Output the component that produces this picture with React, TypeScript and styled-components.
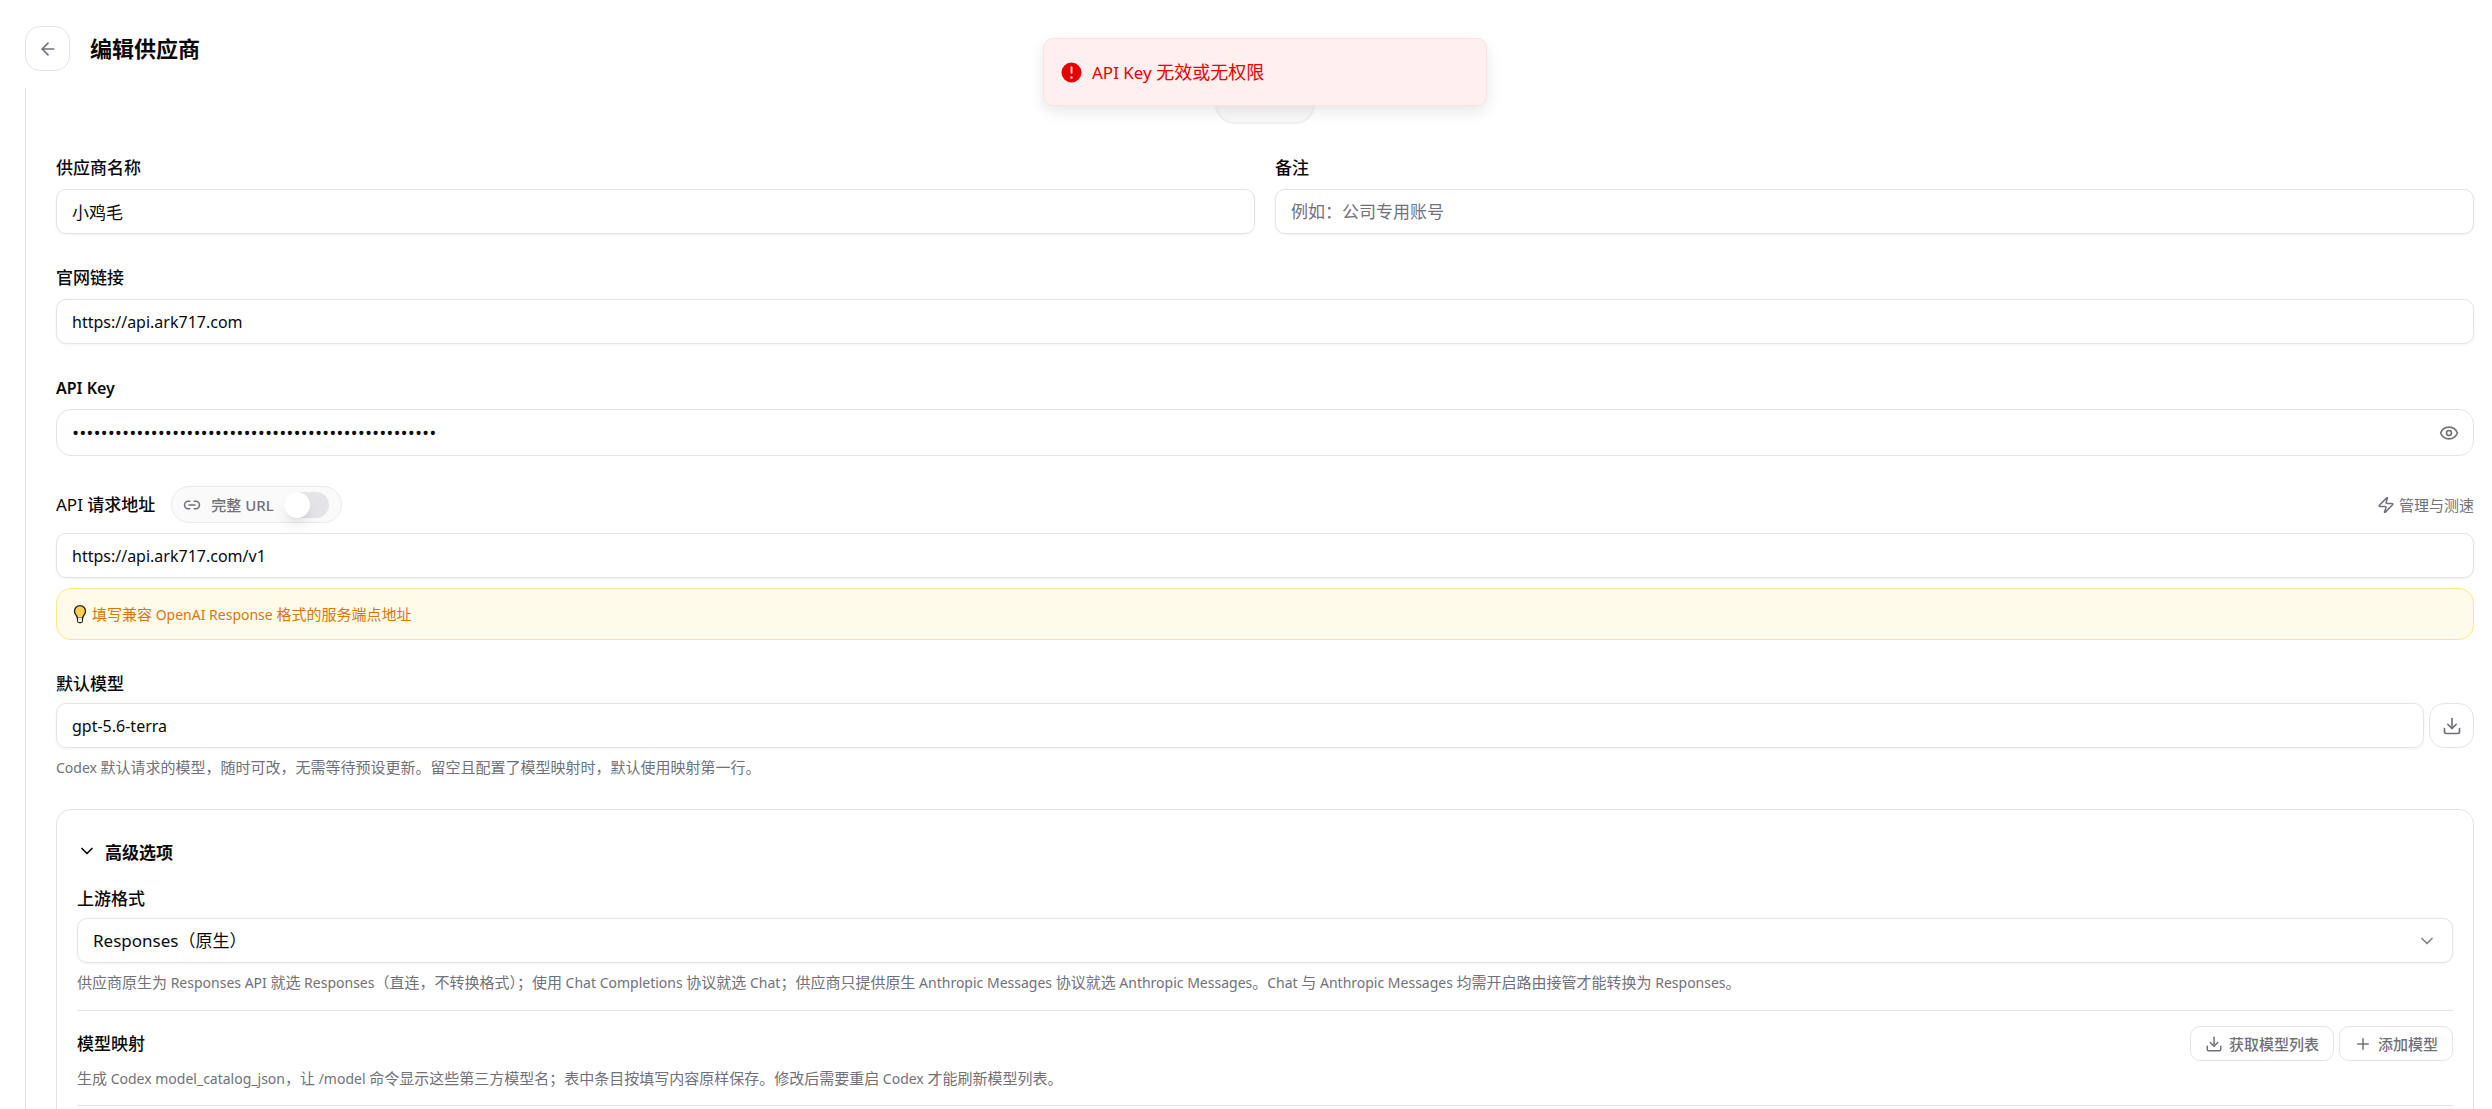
import React, { useState } from "react";
import styled, { createGlobalStyle } from "styled-components";
import { ArrowLeft, ChevronDown, Download, Eye, Link2, Plus, Zap } from "lucide-react";

const color = {
  text: "#09090b",
  muted: "#71717a",
  border: "#e4e4e7",
  surface: "#ffffff",
};

const GlobalStyle = createGlobalStyle`
  *, *::before, *::after { box-sizing: border-box; }
  body {
    margin: 0;
    background: ${color.surface};
    color: ${color.text};
    font-family: "Noto Sans", "Noto Sans CJK SC", sans-serif;
    font-size: 17px;
  }
  button, input, select { font: inherit; color: inherit; margin: 0; }
  svg { flex: none; display: block; }
`;

const Page = styled.div`
  display: flex;
  flex-direction: column;
  height: 100vh;
  overflow: hidden;
`;

const Header = styled.header`
  display: flex;
  align-items: center;
  gap: 20px;
  padding: 26px 25px 17px;
`;

const Title = styled.h1`
  margin: 0;
  padding-bottom: 2px;
  font-size: 22px;
  line-height: 32px;
  font-weight: 700;
`;

const IconButton = styled.button`
  display: flex;
  align-items: center;
  justify-content: center;
  flex: none;
  width: 45px;
  height: 45px;
  padding: 0;
  border: 1px solid ${color.border};
  border-radius: 15px;
  background: ${color.surface};
  color: ${color.muted};
  cursor: pointer;
`;

const Main = styled.main`
  flex: 1;
  min-height: 0;
  margin-left: 25px;
  padding: 0 18px 0 30px;
  border-left: 1px solid ${color.border};
  overflow-y: auto;
  scrollbar-width: none;
`;

const ProviderIcon = styled.button`
  display: block;
  width: 100px;
  height: 100px;
  margin: -64px auto 0;
  border: 2px solid #f1f1f2;
  border-radius: 20px;
  background: #f9f9fa;
`;

const Form = styled.form`
  display: flex;
  flex-direction: column;
  gap: 30px;
  padding: 30px 0 120px;
`;

const Columns = styled.div`
  display: grid;
  grid-template-columns: 1fr 1fr;
  gap: 20px;
`;

const Stack = styled.div<{ $gap: number }>`
  display: flex;
  flex-direction: column;
  gap: ${(p) => p.$gap}px;
`;

const Label = styled.label<{ $strong?: boolean }>`
  line-height: 28px;
  font-weight: ${(p) => (p.$strong ? 600 : 500)};
`;

const Latin = styled.span<{ $size: number; $regular?: boolean }>`
  font-size: ${(p) => p.$size}px;
  font-weight: ${(p) => (p.$regular ? 400 : "inherit")};
  line-height: 1;
`;

const Input = styled.input<{ $latin?: boolean }>`
  flex: 1;
  width: 100%;
  min-height: 45px;
  padding: 0 15px;
  border: 1px solid ${color.border};
  border-radius: 10px;
  background: ${color.surface};
  box-shadow: 0 1px 3px rgba(0, 0, 0, 0.05);
  font-size: ${(p) => (p.$latin ? 16 : 17)}px;
  outline: none;
  &::placeholder { color: ${color.muted}; opacity: 1; }
`;

const SecretBox = styled.div`
  display: flex;
  align-items: center;
  height: 47px;
  padding-right: 14px;
  border: 1px solid ${color.border};
  border-radius: 15px;
`;

const SecretInput = styled.input`
  flex: 1;
  min-width: 0;
  height: 100%;
  padding: 0 15px;
  border: 0;
  background: transparent;
  font-family: "Open Sans", "Noto Sans CJK SC", sans-serif;
  font-size: 19px;
  outline: none;
`;

const PlainButton = styled.button`
  display: inline-flex;
  align-items: center;
  gap: 4px;
  padding: 0;
  border: 0;
  background: none;
  color: ${color.muted};
  font-size: 15px;
  line-height: 22px;
  cursor: pointer;
`;

const Row = styled.div<{ $gap?: number; $spread?: boolean }>`
  display: flex;
  align-items: center;
  gap: ${(p) => p.$gap ?? 0}px;
  justify-content: ${(p) => (p.$spread ? "space-between" : "flex-start")};
`;

const UrlToggle = styled.label`
  display: flex;
  align-items: center;
  gap: 10px;
  height: 37px;
  padding: 0 12px 0 11px;
  border: 1px solid #e9e9eb;
  border-radius: 19px;
  background: #fafafa;
  color: ${color.muted};
  font-size: 15px;
  font-weight: 500;
`;

const Switch = styled.input`
  appearance: none;
  width: 45px;
  height: 26px;
  border-radius: 13px;
  background: #e4e4e7;
  cursor: pointer;
  &::before {
    content: "";
    display: block;
    width: 26px;
    height: 26px;
    border-radius: 50%;
    background: #fff;
    box-shadow: 0 10px 15px -3px rgba(0, 0, 0, 0.1), 0 4px 6px -4px rgba(0, 0, 0, 0.1);
  }
  &:checked { background: #3b82f6; }
  &:checked::before { margin-left: 19px; }
`;

const Hint = styled.div`
  display: flex;
  align-items: center;
  gap: 4px;
  height: 52px;
  padding: 0 15px;
  border: 1px solid #fde68a;
  border-radius: 15px;
  background: #fffbeb;
  color: #d97706;
  font-size: 15px;
  line-height: 22px;
`;

const Help = styled.p`
  margin: 0;
  padding-bottom: 2px;
  color: ${color.muted};
  font-size: 15px;
  line-height: 19px;
`;

const Card = styled.section`
  padding: 20px;
  border: 1px solid ${color.border};
  border-radius: 15px;
`;

const Disclosure = styled.button`
  display: flex;
  align-items: center;
  gap: 8px;
  height: 42px;
  margin-bottom: 13px;
  padding: 0;
  border: 0;
  background: none;
  font-weight: 700;
  cursor: pointer;
`;

const SelectBox = styled.div`
  display: grid;
  align-items: center;
  & > * { grid-area: 1 / 1; }
  & > svg {
    justify-self: end;
    margin-right: 16px;
    opacity: 0.5;
    pointer-events: none;
  }
`;

const Select = styled.select`
  appearance: none;
  width: 100%;
  height: 45px;
  padding: 0 15px;
  border: 1px solid ${color.border};
  border-radius: 10px;
  background: ${color.surface};
  box-shadow: 0 1px 3px rgba(0, 0, 0, 0.05);
  outline: none;
`;

const Mapping = styled.div`
  margin-top: 16px;
  padding: 15px 0;
  border-top: 1px solid ${color.border};
  border-bottom: 1px solid ${color.border};
`;

const SmallButton = styled.button`
  display: inline-flex;
  align-items: center;
  gap: 6px;
  height: 35px;
  padding: 0 14px;
  border: 1px solid ${color.border};
  border-radius: 10px;
  background: ${color.surface};
  color: ${color.muted};
  font-size: 15px;
  font-weight: 500;
  cursor: pointer;
`;

const SectionTitle = styled.h2`
  margin: 0;
  font-size: 17px;
  line-height: 28px;
  font-weight: 500;
`;

const ToastRegion = styled.div`
  position: absolute;
  top: 38px;
  left: 56px;
  right: 18px;
  display: flex;
  justify-content: center;
  pointer-events: none;
`;

const Toast = styled.div`
  display: flex;
  align-items: center;
  gap: 8px;
  width: 444px;
  height: 68px;
  padding: 0 15px;
  border: 1px solid #ffe0e1;
  border-radius: 10px;
  background: #fff0f0;
  box-shadow: 0 5px 15px rgba(0, 0, 0, 0.1);
  color: #e60000;
  font-size: 18px;
  line-height: 24px;
`;

function MixedText({ text, size, regular }: { text: string; size: number; regular?: boolean }) {
  return (
    <>
      {text.split(/([\x20-\x7e]+)/).map((part, i) =>
        i % 2 ? (
          <Latin key={i} $size={size} $regular={regular}>
            {part}
          </Latin>
        ) : (
          part
        )
      )}
    </>
  );
}

function BulbIcon() {
  return (
    <svg width="16" height="20" viewBox="0 0 16 20" aria-hidden="true">
      <path
        d="M5.6 13.5h4.8V17a1.7 1.7 0 0 1-1.7 1.5H7.3A1.7 1.7 0 0 1 5.6 17z"
        fill="#eef2f7"
        stroke="#1f1d1b"
        strokeWidth="1.3"
      />
      <path
        d="M8 1.7a5.5 5.5 0 0 0-5.5 5.5c0 2.2 1.3 3.3 2.1 4.7.4.7.6 1.4.7 2.1h5.4c.1-.7.3-1.4.7-2.1.8-1.4 2.1-2.5 2.1-4.7A5.5 5.5 0 0 0 8 1.7z"
        fill="#ffcb57"
        stroke="#1f1d1b"
        strokeWidth="1.3"
      />
      <path d="M6.1 13.6h3.8V17a1 1 0 0 1-1 .9H7.1a1 1 0 0 1-1-.9z" fill="#eef2f7" />
    </svg>
  );
}

function ErrorIcon() {
  return (
    <svg width="25" height="25" viewBox="0 0 20 20" fill="currentColor" aria-hidden="true">
      <path
        fillRule="evenodd"
        clipRule="evenodd"
        d="M18 10a8 8 0 11-16 0 8 8 0 0116 0zm-8-5a.75.75 0 01.75.75v4.5a.75.75 0 01-1.5 0v-4.5A.75.75 0 0110 5zm0 10a1 1 0 100-2 1 1 0 000 2z"
      />
    </svg>
  );
}

export default function App() {
  const [visible, setVisible] = useState(false);
  return (
    <Page>
      <GlobalStyle />
      <Header>
        <IconButton type="button" aria-label="返回">
          <ArrowLeft size={20} />
        </IconButton>
        <Title>编辑供应商</Title>
      </Header>
      <Main>
        <ProviderIcon type="button" aria-label="图标" />
        <Form onSubmit={(e) => e.preventDefault()}>
          <Columns>
            <Stack $gap={7}>
              <Label htmlFor="name">供应商名称</Label>
              <Input id="name" defaultValue="小鸡毛" />
            </Stack>
            <Stack $gap={7}>
              <Label htmlFor="note">备注</Label>
              <Input id="note" placeholder="例如：公司专用账号" />
            </Stack>
          </Columns>
          <Stack $gap={7}>
            <Label htmlFor="site">官网链接</Label>
            <Input id="site" $latin defaultValue="https://api.ark717.com" />
          </Stack>
          <Stack $gap={7}>
            <Label htmlFor="key" $strong>
              <Latin $size={16}>API Key</Latin>
            </Label>
            <SecretBox>
              <SecretInput
                id="key"
                type={visible ? "text" : "password"}
                autoComplete="off"
                defaultValue={"x".repeat(51)}
              />
              <PlainButton type="button" aria-label="显示" onClick={() => setVisible(!visible)}>
                <Eye size={20} />
              </PlainButton>
            </SecretBox>
          </Stack>
          <Stack $gap={10}>
            <Row $spread>
              <Row $gap={16}>
                <Label htmlFor="endpoint">
                  <MixedText text="API 请求地址" size={17} regular />
                </Label>
                <UrlToggle>
                  <Link2 size={18} />
                  <span>
                    <MixedText text="完整 URL" size={15} />
                  </span>
                  <Switch type="checkbox" role="switch" />
                </UrlToggle>
              </Row>
              <PlainButton type="button">
                <Zap size={18} />
                管理与测速
              </PlainButton>
            </Row>
            <Input id="endpoint" $latin defaultValue="https://api.ark717.com/v1" />
            <Hint>
              <BulbIcon />
              <span>
                <MixedText text="填写兼容 OpenAI Response 格式的服务端点地址" size={14} />
              </span>
            </Hint>
          </Stack>
          <Stack $gap={10}>
            <Stack $gap={5}>
              <Label htmlFor="model">默认模型</Label>
              <Row $gap={5}>
                <Input id="model" $latin defaultValue="gpt-5.6-terra" />
                <IconButton type="button" aria-label="获取模型">
                  <Download size={20} />
                </IconButton>
              </Row>
            </Stack>
            <Help>
              <MixedText
                text="Codex 默认请求的模型，随时可改，无需等待预设更新。留空且配置了模型映射时，默认使用映射第一行。"
                size={14}
              />
            </Help>
          </Stack>
          <Card>
            <Disclosure type="button" aria-expanded="true">
              <ChevronDown size={20} />
              高级选项
            </Disclosure>
            <Stack $gap={10}>
              <Stack $gap={5}>
                <Label htmlFor="format">上游格式</Label>
                <SelectBox>
                  <Select id="format">
                    <option>Responses（原生）</option>
                  </Select>
                  <ChevronDown size={20} />
                </SelectBox>
              </Stack>
              <Help>
                <MixedText
                  text="供应商原生为 Responses API 就选 Responses（直连，不转换格式）；使用 Chat Completions 协议就选 Chat；供应商只提供原生 Anthropic Messages 协议就选 Anthropic Messages。Chat 与 Anthropic Messages 均需开启路由接管才能转换为 Responses。"
                  size={14}
                />
              </Help>
            </Stack>
            <Mapping>
              <Stack $gap={8}>
                <Row $spread>
                  <SectionTitle>模型映射</SectionTitle>
                  <Row $gap={5}>
                    <SmallButton type="button">
                      <Download size={18} />
                      获取模型列表
                    </SmallButton>
                    <SmallButton type="button">
                      <Plus size={18} />
                      添加模型
                    </SmallButton>
                  </Row>
                </Row>
                <Help>
                  <MixedText
                    text="生成 Codex model_catalog_json，让 /model 命令显示这些第三方模型名；表中条目按填写内容原样保存。修改后需要重启 Codex 才能刷新模型列表。"
                    size={14}
                  />
                </Help>
              </Stack>
            </Mapping>
          </Card>
        </Form>
      </Main>
      <ToastRegion>
        <Toast role="alert">
          <ErrorIcon />
          <span>
            <MixedText text="API Key 无效或无权限" size={17} />
          </span>
        </Toast>
      </ToastRegion>
    </Page>
  );
}
